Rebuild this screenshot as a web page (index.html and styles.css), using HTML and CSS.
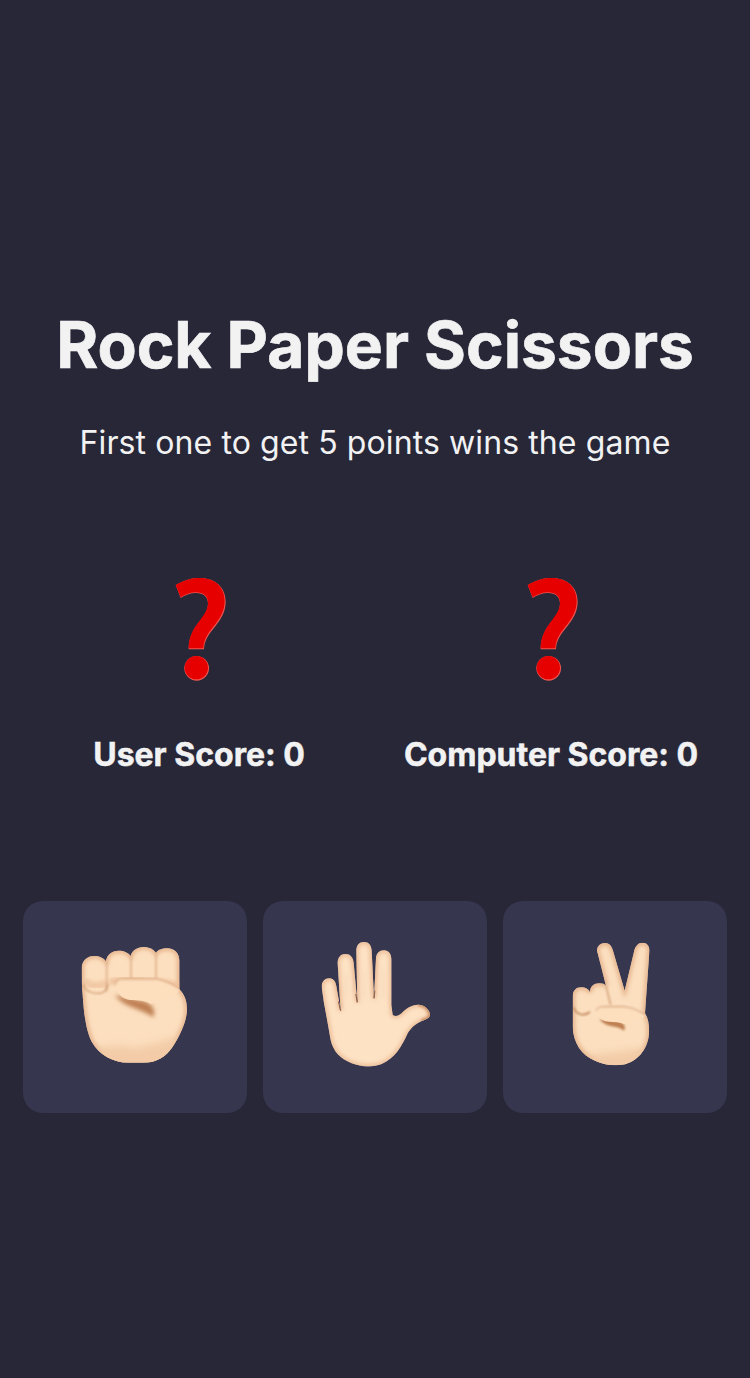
FILE: index.html
```html
<!DOCTYPE html>
<html lang="en">
<head>
<meta charset="utf-8">
<title>Rock Paper Scissors</title>
<link rel="stylesheet" href="styles.css">
</head>
<body>
<main class="game">
  <header class="intro">
    <h1 class="title">Rock Paper Scissors</h1>
    <p class="subtitle">First one to get 5 points wins the game</p>
  </header>
  <section class="scores">
    <div class="player">
      <svg class="mark" viewBox="-5 0 300 390" aria-hidden="true">
        <path class="mark-rim" d="M75 72C105 55 130 50 152 51C195 53 225 80 225 122C225 155 208 178 188 203C172 223 161 240 160 265H114C114 238 122 215 138 193C152 173 172 153 172 128C172 108 158 96 136 96C119 96 103 102 90 111Z"/>
        <path class="mark-fill" d="M75 72C105 55 130 50 152 51C195 53 222 80 222 120C222 153 205 176 185 201C169 221 159 238 158 262H114C114 236 122 213 138 191C152 171 172 151 172 126C172 106 158 94 136 94C119 94 103 100 90 109Z"/>
        <circle class="mark-rim" cx="138" cy="322" r="37"/>
        <circle class="mark-fill" cx="137" cy="320" r="35"/>
      </svg>
      <h2 class="score">User Score: 0</h2>
    </div>
    <div class="player">
      <svg class="mark" viewBox="-5 0 300 390" aria-hidden="true">
        <path class="mark-rim" d="M75 72C105 55 130 50 152 51C195 53 225 80 225 122C225 155 208 178 188 203C172 223 161 240 160 265H114C114 238 122 215 138 193C152 173 172 153 172 128C172 108 158 96 136 96C119 96 103 102 90 111Z"/>
        <path class="mark-fill" d="M75 72C105 55 130 50 152 51C195 53 222 80 222 120C222 153 205 176 185 201C169 221 159 238 158 262H114C114 236 122 213 138 191C152 171 172 151 172 126C172 106 158 94 136 94C119 94 103 100 90 109Z"/>
        <circle class="mark-rim" cx="138" cy="322" r="37"/>
        <circle class="mark-fill" cx="137" cy="320" r="35"/>
      </svg>
      <h2 class="score">Computer Score: 0</h2>
    </div>
  </section>
  <section class="choices">
    <button class="choice" type="button" aria-label="Rock">
      <svg class="hand" viewBox="0 6 450 510" aria-hidden="true">
        <defs>
          <filter id="b1" x="-10%" y="-10%" width="120%" height="120%"><feGaussianBlur stdDeviation="1.4"/></filter>
          <filter id="b2" x="-30%" y="-30%" width="160%" height="160%"><feGaussianBlur stdDeviation="2.5"/></filter>
          <filter id="b5" x="-30%" y="-30%" width="160%" height="160%"><feGaussianBlur stdDeviation="6"/></filter>
          <filter id="b10" x="-30%" y="-30%" width="160%" height="160%"><feGaussianBlur stdDeviation="12"/></filter>
          <clipPath id="fist-clip"><path id="fist-outline" d="M65 145C65 122 82 108 102 108C118 108 131 114 138 124C140 105 155 92 176 92C192 92 205 98 212 108C216 92 232 81 250 81C268 81 281 88 288 99C293 90 306 85 322 85C344 85 358 100 358 122V208C372 222 381 240 381 268C381 300 362 345 338 380C318 410 290 428 250 428H205C160 428 118 405 95 365C80 335 72 290 68 225C65 200 65 170 65 145Z"/></clipPath>
        </defs>
        <g filter="url(#b1)">
          <g clip-path="url(#fist-clip)">
            <rect width="450" height="510" fill="#fcdfbf"/>
            <use href="#fist-outline" fill="none" stroke="#e2ab82" stroke-width="12" filter="url(#b5)"/>
            <path d="M90 392C150 375 190 375 225 385C265 375 320 365 360 345L330 450H110Z" fill="#f3cba7" filter="url(#b10)"/>
            <path d="M70 180C88 200 118 202 140 188" fill="none" stroke="#f0c6a2" stroke-width="20" filter="url(#b5)"/>
            <path d="M140 122V215M213 105V182M288 98V180" fill="none" stroke="#e0b08b" stroke-width="5" filter="url(#b2)"/>
            <path d="M68 192C75 212 95 222 120 220C134 218 142 208 143 190" fill="none" stroke="#cf9a72" stroke-width="4" filter="url(#b2)"/>
            <path d="M150 190C160 175 280 172 358 200" fill="none" stroke="#ecbd98" stroke-width="18" filter="url(#b5)"/>
            <path d="M165 225C190 262 235 262 280 292C290 268 272 248 250 243Z" fill="#bf8053" filter="url(#b5)"/>
            <path d="M168 195C168 184 176 178 190 178H290C315 182 340 195 360 210C345 232 300 236 272 252C255 242 235 240 212 240C186 238 168 218 168 195Z" fill="#fddfbe"/>
            <path d="M168 195C168 184 176 178 190 178H290C315 182 340 195 360 210" fill="none" stroke="#d5a47d" stroke-width="3" filter="url(#b2)"/>
          </g>
        </g>
      </svg>
    </button>
    <button class="choice" type="button" aria-label="Paper">
      <svg class="hand" viewBox="0 6 450 510" aria-hidden="true">
        <defs>
          <clipPath id="palm-clip"><path id="palm-outline" d="M65 200C65 185 75 175 88 175C102 175 108 188 110 205L122 272L113 130C113 112 122 102 137 102C150 102 160 112 161 130L172 247L169 92C169 76 178 66 192 66C206 66 214 76 215 92L222 235L228 115C229 100 238 91 252 91C266 91 274 102 274 118V255L278 285C286 290 296 288 305 280C318 265 335 254 355 254C375 255 390 270 390 285C388 295 378 298 365 303C350 310 335 320 323 340C305 380 285 415 245 432C220 442 185 442 155 430C120 415 100 395 92 360C85 320 78 280 72 250Z"/></clipPath>
        </defs>
        <g filter="url(#b1)">
          <g clip-path="url(#palm-clip)">
            <rect width="450" height="510" fill="#fde2c4"/>
            <use href="#palm-outline" fill="none" stroke="#e6b18a" stroke-width="10" filter="url(#b5)"/>
            <path d="M355 254C375 255 390 270 390 285C388 295 378 298 365 303" fill="none" stroke="#cb9268" stroke-width="10" filter="url(#b2)"/>
            <path d="M190 150V235M137 160V240M250 150V235" fill="none" stroke="#f8dabb" stroke-width="9" filter="url(#b5)"/>
            <path d="M122 272L116 245M172 247L168 222M222 235L224 212" stroke="#7d5240" stroke-width="4" fill="none"/>
          </g>
        </g>
      </svg>
    </button>
    <button class="choice" type="button" aria-label="Scissors">
      <svg class="hand" viewBox="0 6 450 510" aria-hidden="true">
        <defs>
          <clipPath id="peace-clip"><path id="peace-outline" d="M171 92C171 78 182 69 195 69C208 69 215 78 219 92L254 212L282 95C285 78 295 68 308 68C322 68 330 80 328 96L315 280C325 295 328 315 327 340C325 380 300 420 255 433C230 438 195 436 165 422C125 405 100 370 98 320V230C98 212 108 202 124 202C136 202 146 208 150 216C150 200 162 190 178 190C188 190 194 192 198 198L186 150Z"/></clipPath>
        </defs>
        <g filter="url(#b1)">
          <g clip-path="url(#peace-clip)">
            <rect width="450" height="510" fill="#fbdfbf"/>
            <use href="#peace-outline" fill="none" stroke="#e2ab82" stroke-width="12" filter="url(#b5)"/>
            <path d="M120 420C170 395 270 395 330 380L290 460H140Z" fill="#f3cba7" filter="url(#b10)"/>
            <path d="M150 215V270" fill="none" stroke="#dfae88" stroke-width="5" filter="url(#b2)"/>
            <path d="M198 198L212 255" fill="none" stroke="#d5a47d" stroke-width="5" filter="url(#b2)"/>
            <path d="M100 262C108 285 132 290 150 276" fill="none" stroke="#c0865b" stroke-width="5" filter="url(#b2)"/>
            <path d="M178 298C205 328 225 312 252 332C260 318 250 308 235 304Z" fill="#bf8053" filter="url(#b2)"/>
            <path d="M170 272C170 264 178 260 192 260H250C275 262 300 272 318 288C300 298 272 300 252 312C240 306 225 306 210 305C188 305 170 292 170 272Z" fill="#fddfbe"/>
            <path d="M170 272C170 264 178 260 192 260H250C275 262 300 272 318 288" fill="none" stroke="#cb9570" stroke-width="3" filter="url(#b2)"/>
          </g>
        </g>
      </svg>
    </button>
  </section>
</main>
</body>
</html>
```
FILE: styles.css
```css
* {
  box-sizing: border-box;
}

html,
body {
  margin: 0;
  height: 100%;
}

body {
  background: #272738;
  color: #f2f2f3;
  font-family: Inter, "Liberation Sans", sans-serif;
}

.game {
  min-height: 100%;
  padding: 40px 23px 0;
  display: flex;
  flex-direction: column;
  justify-content: center;
}

.intro {
  text-align: center;
}

.title {
  margin: 0;
  font-size: 64px;
  line-height: 77px;
  font-weight: 700;
  -webkit-text-stroke: 0.7px currentColor;
}

.subtitle {
  margin: 40px 0 0;
  font-size: 32px;
  line-height: 39px;
  font-weight: 400;
  letter-spacing: 0.1px;
}

.scores {
  margin-top: 99px;
  display: grid;
  grid-template-columns: 1fr 1fr;
}

.player {
  display: flex;
  flex-direction: column;
  align-items: center;
}

.mark {
  width: 100px;
  height: 130px;
  display: block;
}

.mark-fill {
  fill: #e60000;
}

.mark-rim {
  fill: #f0554f;
}

.score {
  margin: 44px 0 0;
  font-size: 32px;
  line-height: 39px;
  font-weight: 700;
  -webkit-text-stroke: 0.5px currentColor;
}

.choices {
  margin-top: 127px;
  display: grid;
  grid-template-columns: repeat(3, 1fr);
  gap: 16px;
}

.choice {
  height: 212px;
  padding: 0;
  border: 0;
  border-radius: 20px;
  background: #36364f;
  display: flex;
  align-items: center;
  justify-content: center;
}

.hand {
  width: 150px;
  height: 170px;
  display: block;
}
```
